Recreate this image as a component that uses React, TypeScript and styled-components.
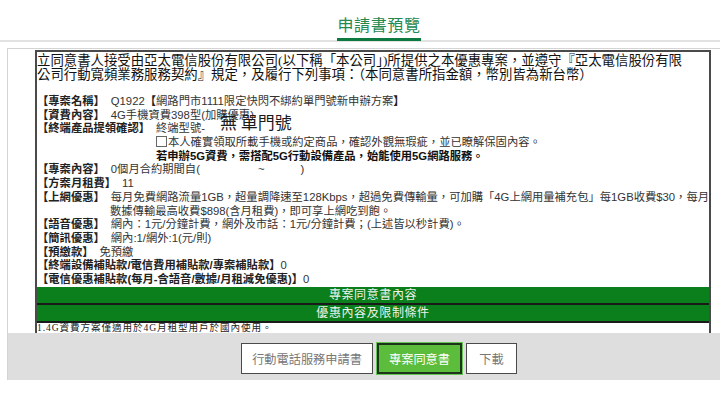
import React from 'react';
import styled, { createGlobalStyle } from 'styled-components';

const GlobalStyle = createGlobalStyle`
  html, body {
    margin: 0;
    padding: 0;
    background: #fff;
  }
  body {
    font-family: "Noto Sans CJK TC", "Liberation Sans", sans-serif;
  }
`;

const Page = styled.div`
  width: 100%;
`;

const Header = styled.div`
  height: 40px;
  padding-left: 38px;
  border-bottom: 2px solid #e2e2e2;
  display: flex;
  justify-content: center;
`;

const TitleTab = styled.div`
  height: 41px;
  box-sizing: border-box;
  padding: 14px 0 4px;
  border-bottom: 3px solid #0c7a3e;
  font-family: "Noto Sans CJK TC", sans-serif;
  font-size: 16px;
  line-height: 20px;
  letter-spacing: 0.6px;
  color: #23894f;
`;

const Frame = styled.div`
  margin: 6px 0 0 7px;
  border-top: 1px solid #d4d4d4;
  border-left: 1px solid #d4d4d4;
`;

const Viewer = styled.div`
  height: 284px;
  box-sizing: border-box;
  padding: 1px 0 0 27px;
  overflow: hidden;
  background: #fff;
`;

const Doc = styled.div`
  position: relative;
  width: 676px;
  box-sizing: border-box;
  border: 2px solid #4a4a4a;
  border-bottom: none;
  color: #111;
`;

const Intro = styled.div`
  padding-top: 2px;
  font-family: "Liberation Serif", "Noto Sans CJK TC", serif;
  font-size: 13.4px;
  line-height: 13.5px;
  white-space: nowrap;
  color: #111;
`;

const Rows = styled.div`
  margin-top: 14px;
  font-family: "Liberation Sans", "Noto Sans CJK TC", sans-serif;
  font-size: 11.3px;
`;

const Row = styled.div<{ $indent?: number; $bold?: boolean }>`
  height: 13.7px;
  line-height: 13.7px;
  padding-left: ${(p) => p.$indent ?? 0}px;
  white-space: nowrap;
  font-weight: ${(p) => (p.$bold ? 700 : 400)};
  color: ${(p) => (p.$bold ? '#111' : '#333')};
`;

const Label = styled.span`
  font-weight: 600;
  color: #222;
  margin-right: 6px;
`;

const Tight = styled(Label)`
  margin-right: 0;
`;

const Check = styled.span`
  display: inline-block;
  width: 9px;
  height: 9px;
  border: 1px solid #666;
  margin-right: 1px;
  vertical-align: -1px;
`;

const Gap = styled.span<{ $w: number }>`
  display: inline-block;
  width: ${(p) => p.$w}px;
`;

const Stamp = styled.div`
  position: absolute;
  left: 183px;
  top: 61px;
  font-family: "Noto Sans CJK TC", sans-serif;
  font-size: 17px;
  line-height: 17px;
  color: #1a1a1a;
  white-space: nowrap;
`;

const GreenBar = styled.div`
  height: 16px;
  line-height: 16px;
  background: #0a7f1c;
  border-bottom: 2px solid #1a1a1a;
  text-align: center;
  font-family: "Liberation Serif", "Noto Sans CJK TC", serif;
  font-size: 12px;
  letter-spacing: 0.6px;
  color: #eef3ea;
`;

const Clause = styled.div`
  font-family: "Liberation Serif", "Noto Sans CJK TC", serif;
  font-size: 9.6px;
  line-height: 10px;
  letter-spacing: 0.9px;
  color: #222;
  white-space: nowrap;
`;

const ButtonBar = styled.div`
  height: 47px;
  box-sizing: border-box;
  padding: 10px 0 0 30px;
  background: #dedede;
  display: flex;
  justify-content: center;
  gap: 4px;
`;

const Button = styled.button<{ $active?: boolean; $w: number }>`
  width: ${(p) => p.$w}px;
  height: 31px;
  box-sizing: border-box;
  padding: 0;
  font-family: "Noto Sans CJK TC", sans-serif;
  font-size: 12.2px;
  background: ${(p) => (p.$active ? '#5bbd3b' : '#fff')};
  color: ${(p) => (p.$active ? '#fff' : '#777')};
  border: ${(p) => (p.$active ? '2px solid #1d331d' : '1px solid #4a4a4a')};
  box-shadow: ${(p) => (p.$active ? '0 0 0 1px #67c455' : 'none')};
  cursor: pointer;
`;

const App = () => {
  return (
    <Page>
      <GlobalStyle />
      <Header>
        <TitleTab>申請書預覽</TitleTab>
      </Header>
      <Frame>
        <Viewer>
          <Doc>
            <Intro>
              立同意書人接受由亞太電信股份有限公司(以下稱「本公司」)所提供之本優惠專案，並遵守『亞太電信股份有限
              <br />
              公司行動寬頻業務服務契約』規定，及履行下列事項：（本同意書所指金額，幣別皆為新台幣）
            </Intro>
            <Rows>
              <Row>
                <Label>【專案名稱】</Label>Q1922<Tight>【</Tight>網路門市1111限定快閃不綁約單門號新申辦方案<Tight>】</Tight>
              </Row>
              <Row>
                <Label>【資費內容】</Label>4G手機資費398型(加購優惠)
              </Row>
              <Row>
                <Label>【終端產品提領確認】</Label>終端型號-
              </Row>
              <Row $indent={119}>
                <Check />本人確實領取所載手機或約定商品，確認外觀無瑕疵，並已瞭解保固內容。
              </Row>
              <Row $indent={119} $bold>
                若申辦5G資費，需搭配5G行動設備產品，始能使用5G網路服務。
              </Row>
              <Row>
                <Label>【專案內容】</Label>0個月合約期間自(<Gap $w={58} />~<Gap $w={36} />)
              </Row>
              <Row>
                <Label>【方案月租費】</Label>11
              </Row>
              <Row>
                <Label>【上網優惠】</Label>每月免費網路流量1GB，超量調降速至128Kbps，超過免費傳輸量，可加購「4G上網用量補充包」每1GB收費$30，每月
              </Row>
              <Row $indent={73}>數據傳輸最高收費$898(含月租費)，即可享上網吃到飽。</Row>
              <Row>
                <Label>【語音優惠】</Label>網內：1元/分鐘計費，網外及市話：1元/分鐘計費；(上述皆以秒計費)。
              </Row>
              <Row>
                <Label>【簡訊優惠】</Label>網內:1/網外:1(元/則)
              </Row>
              <Row>
                <Label>【預繳款】</Label>免預繳
              </Row>
              <Row>
                <Tight>【終端設備補貼款/電信費用補貼款/專案補貼款】</Tight>0
              </Row>
              <Row>
                <Tight>【電信優惠補貼款(每月-含語音/數據/月租減免優惠)】</Tight>0
              </Row>
            </Rows>
            <GreenBar>專案同意書內容</GreenBar>
            <GreenBar>優惠內容及限制條件</GreenBar>
            <Clause>1.4G資費方案僅適用於4G月租型用戶於國內使用。</Clause>
            <Stamp>無 單門號</Stamp>
          </Doc>
        </Viewer>
        <ButtonBar>
          <Button $w={132}>行動電話服務申請書</Button>
          <Button $w={85} $active>
            專案同意書
          </Button>
          <Button $w={51}>下載</Button>
        </ButtonBar>
      </Frame>
    </Page>
  );
};

export default App;
